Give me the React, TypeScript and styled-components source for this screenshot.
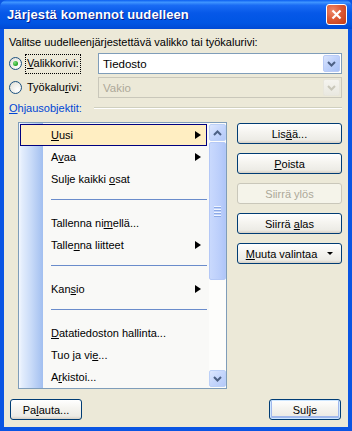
import React from 'react'
import styled, { createGlobalStyle } from 'styled-components'

const GlobalStyle = createGlobalStyle`
  html, body {
    margin: 0;
    padding: 0;
    background: #ece9d8;
  }
  * {
    box-sizing: border-box;
  }
`

const uiFont = `'Liberation Sans', Arial, sans-serif`

const Window = styled.div`
  width: 352px;
  height: 431px;
  display: flex;
  flex-direction: column;
  background: #0a55e3;
  font-family: ${uiFont};
  font-size: 11px;
  color: #000;
`

const TitleBar = styled.div`
  height: 29px;
  flex: none;
  display: flex;
  align-items: center;
  justify-content: space-between;
  padding: 0 5px 0 7px;
  border-radius: 7px 7px 0 0;
  background: linear-gradient(
    #0a5ef0 0%,
    #3f95ff 8%,
    #1a6cf4 18%,
    #0658e8 45%,
    #0055e3 80%,
    #0049d4 100%
  );
`

const Title = styled.span`
  color: #fff;
  font-weight: bold;
  font-size: 13px;
  letter-spacing: 0.1px;
  text-shadow: 1px 1px 0 #0a1e8a;
`

const CloseButton = styled.div`
  width: 21px;
  height: 21px;
  border: 1px solid #fff;
  border-radius: 3px;
  background: radial-gradient(circle at 30% 30%, #ee8a6c 0%, #dc5a36 45%, #c23a14 100%);
  display: flex;
  align-items: center;
  justify-content: center;
`

const Body = styled.div`
  flex: 1;
  margin: 0 4px 4px 4px;
  background: #ece9d8;
  display: flex;
  flex-direction: column;
  padding: 7px 6px 7px 5px;
`

const Prompt = styled.div`
  height: 13px;
  line-height: 13px;
`

const PickerGrid = styled.div`
  margin-top: 4px;
  display: grid;
  grid-template-columns: 89px 1fr;
  row-gap: 3px;
`

const RadioLabel = styled.div`
  display: flex;
  align-items: center;
  height: 21px;
`

const RadioCircle = styled.span<{ $checked?: boolean }>`
  width: 13px;
  height: 13px;
  border-radius: 50%;
  border: 1px solid #1c5180;
  background: radial-gradient(circle at 70% 70%, #ffffff 0%, #ecebe5 60%, #d6d3c8 100%);
  display: flex;
  align-items: center;
  justify-content: center;
  flex: none;

  &::after {
    content: '';
    display: ${p => (p.$checked ? 'block' : 'none')};
    width: 5px;
    height: 5px;
    border-radius: 50%;
    background: radial-gradient(circle at 35% 35%, #7fe27f 0%, #21a121 70%);
  }
`

const LabelText = styled.span<{ $focused?: boolean }>`
  margin-left: 3px;
  padding: 2px 1px 3px 1px;
  border: 1px dotted ${p => (p.$focused ? '#000' : 'transparent')};
  line-height: 13px;
`

const Combo = styled.div<{ $disabled?: boolean }>`
  height: 21px;
  display: flex;
  align-items: stretch;
  border: 1px solid ${p => (p.$disabled ? '#c9c7ba' : '#7f9db9')};
  background: ${p => (p.$disabled ? '#ece9d8' : '#fff')};
  color: ${p => (p.$disabled ? '#aca899' : '#000')};
  padding: 1px;
`

const ComboText = styled.span`
  flex: 1;
  display: flex;
  align-items: center;
  padding-left: 3px;
  font-size: 11.5px;
`

const ComboButton = styled.span<{ $disabled?: boolean }>`
  width: 17px;
  border-radius: 2px;
  border: 1px solid ${p => (p.$disabled ? '#e8e6dc' : '#b9cbf6')};
  background: ${p =>
    p.$disabled
      ? 'linear-gradient(#f5f4ef, #e9e8e0)'
      : 'linear-gradient(135deg, #dbe5fd 0%, #c1d3fb 45%, #a9c2f7 100%)'};
  display: flex;
  align-items: center;
  justify-content: center;
`

const SectionRow = styled.div`
  margin-top: 4px;
  display: flex;
  align-items: center;
  height: 12px;
`

const SectionLabel = styled.span`
  color: #0046d5;
  line-height: 12px;
`

const Etch = styled.span`
  flex: 1;
  margin-left: 12px;
  height: 2px;
  border-top: 1px solid #d0d0bf;
  border-bottom: 1px solid #fff;
`

const Main = styled.div`
  margin-top: 8px;
  flex: 1;
  display: flex;
  padding-left: 9px;
`

const ListBox = styled.div`
  width: 209px;
  border: 1px solid #7f9db9;
  background: #fff;
  display: flex;
`

const Items = styled.div`
  flex: 1;
  padding: 1px 2px 0 1px;
  background: linear-gradient(
    to right,
    #f3f7fe 0px,
    #e3edfc 3px,
    #c9dbf8 12px,
    #a2bff0 24px,
    #f9f9f7 24px
  );
`

const Item = styled.div<{ $selected?: boolean }>`
  height: 22px;
  display: flex;
  align-items: center;
  justify-content: space-between;
  padding: 0 5px 0 30px;
  border: 1px solid ${p => (p.$selected ? '#000080' : 'transparent')};
  background: ${p => (p.$selected ? '#ffeec2' : 'transparent')};
  white-space: nowrap;
`

const Separator = styled.div`
  height: 22px;
  padding: 9px 0 0 31px;

  &::after {
    content: '';
    display: block;
    height: 1px;
    background: #6a8ccb;
  }
`

const SubArrow = styled.span`
  width: 0;
  height: 0;
  border-top: 4px solid transparent;
  border-bottom: 4px solid transparent;
  border-left: 6px solid #000;
`

const ScrollBar = styled.div`
  width: 17px;
  display: flex;
  flex-direction: column;
  background: #fdfdfb;
  padding: 1px 0;
`

const ScrollButton = styled.div`
  height: 17px;
  border: 1px solid #bcd0f7;
  border-radius: 2px;
  background: linear-gradient(135deg, #dde7fe 0%, #c5d6fc 50%, #b4c9f8 100%);
  display: flex;
  align-items: center;
  justify-content: center;
  flex: none;
`

const Thumb = styled.div`
  height: 138px;
  margin-top: 1px;
  border: 1px solid #b4c8f6;
  border-radius: 2px;
  background: linear-gradient(to right, #c9d9fd 0%, #bccffb 60%, #b0c6f8 100%);
  display: flex;
  flex-direction: column;
  align-items: center;
  justify-content: center;
  gap: 1px;
  flex: none;
`

const GripLine = styled.span`
  width: 7px;
  height: 1px;
  background: #eef4fe;
  box-shadow: 0 1px 0 #8caae6;
  margin-bottom: 1px;
`

const Track = styled.div`
  flex: 1;
`

const SideButtons = styled.div`
  margin-left: 10px;
  padding-top: 1px;
  display: flex;
  flex-direction: column;
  gap: 9px;
  width: 105px;
`

const XPButton = styled.div<{ $disabled?: boolean; $default?: boolean; $width?: number }>`
  height: 21px;
  width: ${p => (p.$width ? `${p.$width}px` : '100%')};
  border: 1px solid ${p => (p.$disabled ? '#c9c7ba' : '#003c74')};
  border-radius: 3px;
  background: ${p =>
    p.$disabled
      ? '#f5f4ea'
      : 'linear-gradient(#ffffff 0%, #f6f5f1 40%, #ecebe5 85%, #d6d0c5 100%)'};
  color: ${p => (p.$disabled ? '#aca899' : '#000')};
  box-shadow: ${p => (p.$default ? 'inset 0 0 0 1px #cee7ff, inset 0 -1px 0 2px #a0b8ec' : 'none')};
  display: flex;
  align-items: center;
  justify-content: center;
  gap: 10px;
  white-space: nowrap;
`

const DropTriangle = styled.span`
  width: 0;
  height: 0;
  border-left: 3px solid transparent;
  border-right: 3px solid transparent;
  border-top: 3px solid #000;
`

const Footer = styled.div`
  margin-top: 10px;
  display: flex;
  justify-content: space-between;
  padding-left: 1px;
  padding-right: 1px;
`

// "&" marks the mnemonic letter, as in Windows resources
const Mnemonic: React.FC<{ text: string }> = ({ text }) => {
  const i = text.indexOf('&')
  if (i < 0) return <>{text}</>
  return (
    <>
      {text.slice(0, i)}
      <u>{text.charAt(i + 1)}</u>
      {text.slice(i + 2)}
    </>
  )
}

const Chevron: React.FC<{ up?: boolean; color?: string }> = ({ up, color = '#4d6185' }) => (
  <svg width="9" height="6" viewBox="0 0 9 6">
    <path
      d={up ? 'M1 5 L4.5 1.5 L8 5' : 'M1 1 L4.5 4.5 L8 1'}
      fill="none"
      stroke={color}
      strokeWidth="2"
    />
  </svg>
)

type Entry = { label: string; sub?: boolean } | 'sep'

const entries: Entry[] = [
  { label: '&Uusi', sub: true },
  { label: 'A&vaa', sub: true },
  { label: 'Sulje kaikki &osat' },
  'sep',
  { label: 'Tallenna ni&mellä...' },
  { label: 'Talle&nna liitteet', sub: true },
  'sep',
  { label: 'Kan&sio', sub: true },
  'sep',
  { label: '&Datatiedoston hallinta...' },
  { label: 'Tuo ja vi&e...' },
  { label: 'A&rkistoi...' },
]

export default function App() {
  return (
    <>
      <GlobalStyle />
      <Window>
        <TitleBar>
          <Title>Järjestä komennot uudelleen</Title>
          <CloseButton>
            <svg width="11" height="11" viewBox="0 0 11 11">
              <path d="M1.5 1.5 L9.5 9.5 M9.5 1.5 L1.5 9.5" stroke="#fff" strokeWidth="2.2" />
            </svg>
          </CloseButton>
        </TitleBar>
        <Body>
          <Prompt>Valitse uudelleenjärjestettävä valikko tai työkalurivi:</Prompt>
          <PickerGrid>
            <RadioLabel>
              <RadioCircle $checked />
              <LabelText $focused>
                <Mnemonic text="&Valikkorivi:" />
              </LabelText>
            </RadioLabel>
            <Combo>
              <ComboText>Tiedosto</ComboText>
              <ComboButton>
                <Chevron />
              </ComboButton>
            </Combo>
            <RadioLabel>
              <RadioCircle />
              <LabelText>
                <Mnemonic text="Työkalu&rivi:" />
              </LabelText>
            </RadioLabel>
            <Combo $disabled>
              <ComboText>Vakio</ComboText>
              <ComboButton $disabled>
                <Chevron color="#c9c7ba" />
              </ComboButton>
            </Combo>
          </PickerGrid>
          <SectionRow>
            <SectionLabel>
              <Mnemonic text="&Ohjausobjektit:" />
            </SectionLabel>
            <Etch />
          </SectionRow>
          <Main>
            <ListBox>
              <Items>
                {entries.map((e, i) =>
                  e === 'sep' ? (
                    <Separator key={i} />
                  ) : (
                    <Item key={i} $selected={i === 0}>
                      <span>
                        <Mnemonic text={e.label} />
                      </span>
                      {e.sub && <SubArrow />}
                    </Item>
                  )
                )}
              </Items>
              <ScrollBar>
                <ScrollButton>
                  <Chevron up />
                </ScrollButton>
                <Thumb>
                  <GripLine />
                  <GripLine />
                  <GripLine />
                  <GripLine />
                </Thumb>
                <Track />
                <ScrollButton>
                  <Chevron />
                </ScrollButton>
              </ScrollBar>
            </ListBox>
            <SideButtons>
              <XPButton>
                <span>
                  <Mnemonic text="Lis&ää..." />
                </span>
              </XPButton>
              <XPButton>
                <span>
                  <Mnemonic text="&Poista" />
                </span>
              </XPButton>
              <XPButton $disabled>Siirrä ylös</XPButton>
              <XPButton>
                <span>
                  <Mnemonic text="Siirrä &alas" />
                </span>
              </XPButton>
              <XPButton>
                <span>
                  <Mnemonic text="&Muuta valintaa" />
                </span>
                <DropTriangle />
              </XPButton>
            </SideButtons>
          </Main>
          <Footer>
            <XPButton $width={72}>
              <span>
                <Mnemonic text="Pa&lauta..." />
              </span>
            </XPButton>
            <XPButton $width={72} $default>
              Sulje
            </XPButton>
          </Footer>
        </Body>
      </Window>
    </>
  )
}
